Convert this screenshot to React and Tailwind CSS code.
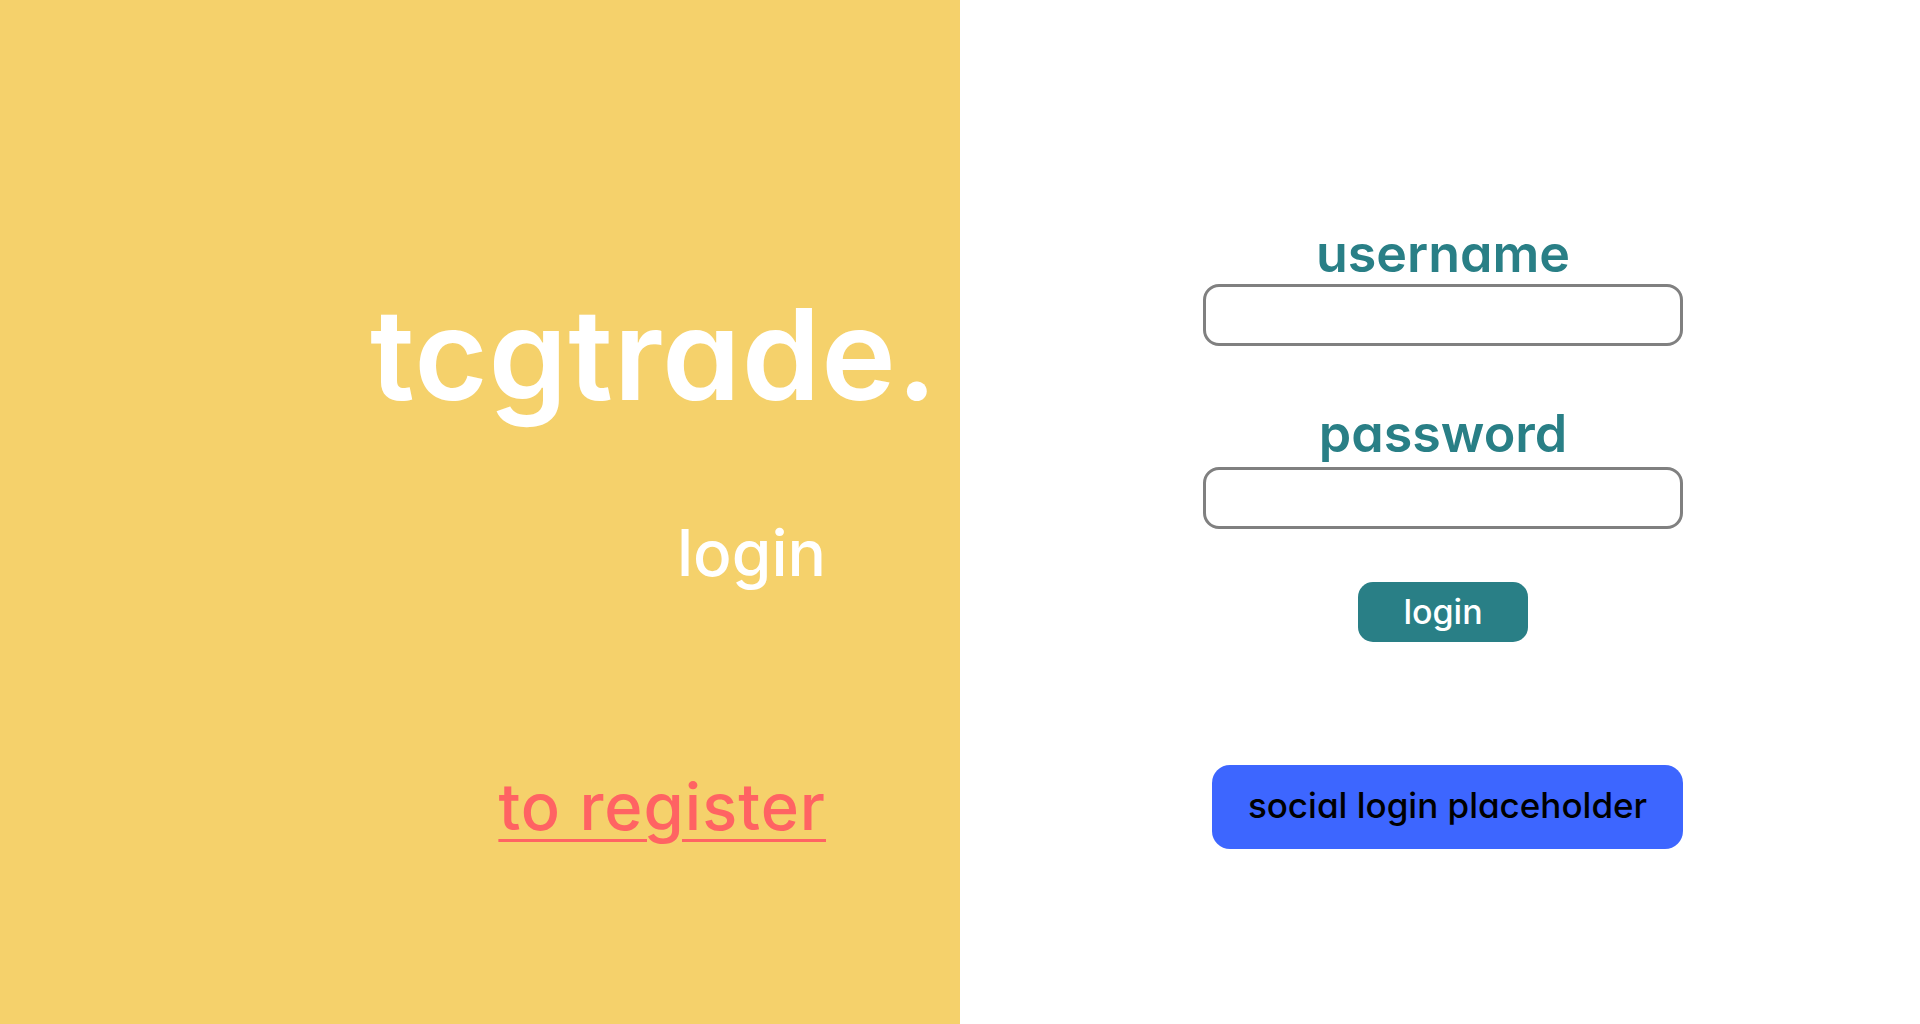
import React, { useState } from 'react';

const font = "font-['Inter','Noto_Sans',sans-serif] [font-feature-settings:'cv11']";

export default function App() {
    const [username, setUsername] = useState('');
    const [password, setPassword] = useState('');

    return (
        <div className={`flex w-full h-[1024px] ${font}`}>

            {/* LEFT / BRAND */}
            <div className="w-[960px] h-full bg-[#f5d16b] flex flex-col items-end pr-[22px] pt-[291px]">
                <h1 className="text-[126px] leading-none font-semibold text-white tracking-[1px]">
                    tcgtrade.
                </h1>

                <div className="flex flex-col items-end pr-[112px]">
                    <p className="mt-[104px] text-[64px] leading-none font-medium text-white">
                        login
                    </p>

                    <a
                        href="#"
                        className="mt-[189px] text-[65px] leading-none font-medium tracking-[1px] text-[#ff6363] underline decoration-[3px] underline-offset-[9px]"
                    >
                        to register
                    </a>
                </div>
            </div>

            {/* RIGHT / FORM */}
            <div className="w-[960px] h-full bg-white pt-[228px]">
                <div className="ml-[243px] w-[480px] flex flex-col items-center">
                    <label className="text-[52px] leading-none font-semibold text-[#297f86]">
                        username
                    </label>
                    <input
                        value={username}
                        onChange={(e) => setUsername(e.target.value)}
                        className="mt-[4px] w-full h-[62px] rounded-[16px] border-[3px] border-[#808080] px-4 text-2xl outline-none"
                    />

                    <label className="mt-[62px] text-[52px] leading-none font-semibold text-[#297f86]">
                        password
                    </label>
                    <input
                        type="password"
                        value={password}
                        onChange={(e) => setPassword(e.target.value)}
                        className="mt-[7px] w-full h-[62px] rounded-[16px] border-[3px] border-[#808080] px-4 text-2xl outline-none"
                    />

                    <button className="mt-[53px] w-[170px] h-[60px] rounded-[15px] bg-[#297f86] text-white text-[34px] font-medium leading-none">
                        login
                    </button>

                    <button className="mt-[123px] self-end w-[471px] h-[84px] rounded-[18px] bg-[#3d66ff] text-black text-[35px] font-medium leading-none pb-[3px]">
                        social login placeholder
                    </button>
                </div>
            </div>
        </div>
    );
}
